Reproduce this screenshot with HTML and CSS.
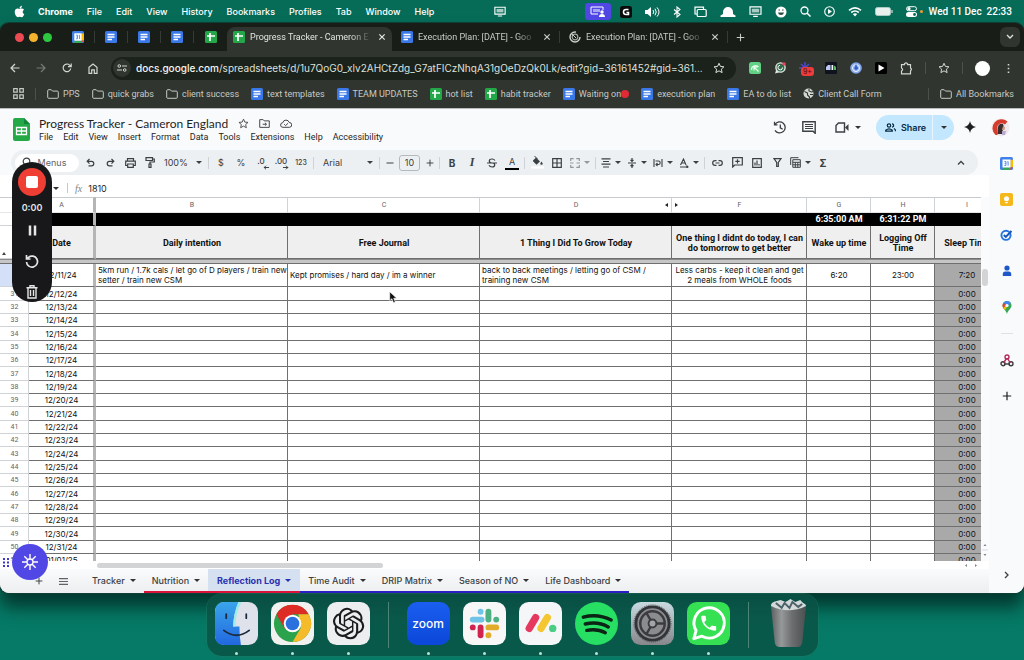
FILE: index.html
```html
<!DOCTYPE html>
<html lang="en">
<head>
    <meta charset="UTF-8">
    <meta name="viewport" content="width=device-width, initial-scale=1.0">
    <title>Progress Tracker - Cameron England</title>
    <link rel="stylesheet" href="styles.css">
</head>
<body>
    <!-- shared icons -->
    <svg class="sprite" aria-hidden="true">
        <symbol id="docs" viewBox="0 0 12 12"><rect width="12" height="12" rx="1.5" fill="#3b78e7"/><path d="M2.5 3.5h7M2.5 6h7M2.5 8.5h4.5" stroke="#fff" stroke-width="1.3"/></symbol>
        <symbol id="sheets" viewBox="0 0 12 12"><rect width="12" height="12" rx="1.5" fill="#23a748"/><path d="M5 2v8M2 5h8" stroke="#fff" stroke-width="1.7"/></symbol>
        <symbol id="calendar" viewBox="0 0 12 12"><rect width="12" height="12" rx="1.5" fill="#3f80ea"/><path d="M9.5 2.5H12V9.5H9.5z" fill="#fbbc04"/><path d="M2.5 9.5h7V12h-7z" fill="#34a853"/><path d="M9.5 9.5H12L9.5 12z" fill="#ea4335"/><rect x="2.3" y="2.3" width="7.4" height="7.4" fill="#fff"/><path d="M4 4.2h1.5v3.6H4M4.3 6h1.2M7.5 8V4.2l-.8.4" fill="none" stroke="#3f80ea" stroke-width=".8"/></symbol>
        <symbol id="folder" viewBox="0 0 12 10"><path d="M.7 8.300V1.700q0-1 1-1h2.500l1.300 1.400h4.800q1 0 1 1v5.200q0 1-1 1H1.700q-1 0-1-1z" fill="none" stroke="currentColor"/></symbol>
        <symbol id="close" viewBox="0 0 8 8"><path d="M1.300 1.300l5.400 5.400M6.700 1.300L1.300 6.700" stroke="currentColor" stroke-width="1.200"/></symbol>
        <symbol id="plus" viewBox="0 0 10 10"><path d="M5 .8v8.400M.8 5h8.400" stroke="currentColor" stroke-width="1.200"/></symbol>
        <symbol id="star" viewBox="0 0 24 24"><path d="M12 2.500l2.900 6.400 7 .7-5.200 4.700 1.500 6.900L12 17.700l-6.200 3.500 1.500-6.900L2.100 9.600l7-.7z" fill="none" stroke="currentColor" stroke-width="2"/></symbol>
        <symbol id="screen" viewBox="0 0 14 12"><path d="M1 1h12v8H1zM4.500 11.300h5" fill="none" stroke="currentColor" stroke-width="1.300"/><path d="M3 3h8v4H3z" fill="currentColor" opacity=".65"/></symbol>
    </svg>

    <div class="desktop">
        <header class="menubar">
            <svg class="apple" viewBox="0 0 384 512" width="11" height="13"><path fill="#fff" d="M318.700 268.700c-.2-36.700 16.400-64.400 50-84.800-18.800-26.900-47.200-41.700-84.700-44.600-35.500-2.800-74.300 20.700-88.500 20.700-15 0-49.400-19.700-76.400-19.700C63.300 141.200 4 184.800 4 273.500q0 39.300 14.400 81.200c12.800 36.700 59 126.700 107.200 125.200 25.200-.6 43-17.900 75.800-17.900 31.800 0 48.300 17.900 76.400 17.900 48.600-.7 90.400-82.500 102.600-119.300-65.200-30.700-61.700-90-61.700-91.900zm-56.600-164.200c27.300-32.400 24.800-61.900 24-72.500-24.100 1.400-52 16.400-67.900 34.900-17.500 19.800-27.800 44.300-25.600 71.900 26.100 2 49.900-11.400 69.500-34.300z"/></svg>
            <nav class="app-menu">
                <button class="app-name">Chrome</button>
                <button>File</button>
                <button>Edit</button>
                <button>View</button>
                <button>History</button>
                <button>Bookmarks</button>
                <button>Profiles</button>
                <button>Tab</button>
                <button>Window</button>
                <button>Help</button>
            </nav>
            <svg class="status-center" width="12" height="11"><use href="#screen"/></svg>
            <div class="status">
                <span class="sharing"><svg width="15" height="11" viewBox="0 0 15 11"><path d="M8 8H1V1h12v3" fill="none" stroke="#fff"/><path d="M3 3h7v3H3z" fill="#fff" opacity=".5"/><circle cx="12" cy="6" r="1.700" fill="#fff"/><path d="M9 11q0-3 3-3t3 3z" fill="#fff"/></svg></span>
                <svg width="12" height="12" viewBox="0 0 12 12"><rect width="12" height="12" rx="2.500" fill="#090c0b"/><path d="M8.500 3.500H6a2.500 2.500 0 0 0 0 5h2.500V6.500H6.500" fill="none" stroke="#fff" stroke-width="1.500"/></svg>
                <svg width="15" height="12" viewBox="0 0 15 12"><path d="M0 4h2.500L6 1v10L2.500 8H0z" fill="#fff"/><path d="M8 4q1.500 2 0 4M10 2.700q2.500 3.300 0 6.600M12 1.400q4 4.600 0 9.200" fill="none" stroke="#fff"/></svg>
                <svg width="8" height="12" viewBox="0 0 8 12"><path d="M1 3.500l6 5L4 11V1l3 2.500-6 5" fill="none" stroke="#fff" stroke-width="1.100"/></svg>
                <svg width="13" height="12" viewBox="0 0 13 12"><path d="M9.500 3V1.200H1V8h2" fill="none" stroke="#fff" stroke-width="1.200"/><rect x="3.200" y="3.500" width="9" height="7" rx="1" fill="none" stroke="#fff" stroke-width="1.200"/></svg>
                <svg width="16" height="12" viewBox="0 0 16 12"><path d="M3 8V6a5 5 0 0 1 10 0v2l2.500 1.500V11H.5V9.500z" fill="#fff"/></svg>
                <svg width="13" height="11"><use href="#screen"/></svg>
                <svg width="12" height="12" viewBox="0 0 12 12"><circle cx="6" cy="6" r="5.500" fill="#fff"/><path d="M3 6.500h6q-.5 2.500-3 2.500T3 6.500z" fill="#2b4a41"/><path d="M3.500 4h1.500M7 4h1.500" stroke="#2b4a41"/></svg>
                <svg width="11" height="11" viewBox="0 0 11 11"><circle cx="4.500" cy="4.500" r="3.500" fill="none" stroke="#fff" stroke-width="1.300"/><path d="M7 7l3.500 3.500" stroke="#fff" stroke-width="1.500"/></svg>
                <svg width="11" height="11" viewBox="0 0 11 11"><circle cx="5.500" cy="5.500" r="4.800" fill="none" stroke="#fff" stroke-width="1.100"/><path d="M4 3l4 2.500L4 8z" fill="#fff"/></svg>
                <svg width="14" height="11" viewBox="0 0 14 11"><path d="M1 4.300q6-5 12 0M3.200 6.500q3.800-3 7.600 0" fill="none" stroke="#fff" stroke-width="1.600"/><path d="M4.800 8q2.200-1.600 4.400 0L7 10.500z" fill="#fff"/></svg>
                <svg width="18" height="9" viewBox="0 0 18 9"><rect x=".5" y=".5" width="15" height="8" rx="2" fill="#e8f1ee" stroke="#a8cbc2"/><path d="M17 3v3" stroke="#a8cbc2" stroke-width="1.500"/></svg>
                <svg width="17" height="11" viewBox="0 0 17 11"><rect x=".5" y=".7" width="10" height="4" rx="2" fill="none" stroke="#fff"/><circle cx="3" cy="2.700" r="1.600" fill="#fff"/><rect y="6" width="11" height="5" rx="2.500" fill="#fff"/><circle cx="8.500" cy="8.500" r="1.400" fill="#066b57"/><circle cx="15.500" cy="5.500" r="1.500" fill="#f59b2d"/></svg>
            </div>
            <time class="clock">Wed 11 Dec&nbsp; 22:33</time>
        </header>

        <main class="window">
            <div class="tabstrip">
                <div class="lights"><i class="red"></i><i class="yellow"></i><i class="green"></i></div>
                <div class="pinned">
                    <button aria-label="Calendar"><svg width="12" height="12"><use href="#calendar"/></svg></button>
                    <button aria-label="Document 1"><svg width="12" height="12"><use href="#docs"/></svg></button>
                    <button aria-label="Document 2"><svg width="12" height="12"><use href="#docs"/></svg></button>
                    <button aria-label="Document 3"><svg width="12" height="12"><use href="#docs"/></svg></button>
                    <button aria-label="Sheet"><svg width="12" height="12"><use href="#sheets"/></svg></button>
                </div>
                <div class="tab active">
                    <svg width="12" height="12"><use href="#sheets"/></svg>
                    <span class="tab-title">Progress Tracker - Cameron E</span>
                    <button aria-label="Close tab"><svg width="8" height="8"><use href="#close"/></svg></button>
                </div>
                <div class="tab">
                    <svg width="12" height="12"><use href="#docs"/></svg>
                    <span class="tab-title">Execution Plan: [DATE] - Goo</span>
                    <button aria-label="Close tab"><svg width="8" height="8"><use href="#close"/></svg></button>
                </div>
                <div class="tab">
                    <svg width="12" height="12" viewBox="0 0 12 12"><circle cx="6" cy="6" r="5" fill="none" stroke="#ccd0cc" stroke-width="1.400" stroke-dasharray="24 7"/><circle cx="6" cy="6" r="2.800" fill="none" stroke="#9da39d" stroke-width="1.200"/><path d="M3 3l4 4" stroke="#ccd0cc"/></svg>
                    <span class="tab-title">Execution Plan: [DATE] - Goo</span>
                    <button aria-label="Close tab"><svg width="8" height="8"><use href="#close"/></svg></button>
                </div>
                <button class="new-tab" aria-label="New tab"><svg width="9" height="9"><use href="#plus"/></svg></button>
                <button class="tab-search" aria-label="Search tabs"><svg width="8" height="6" viewBox="0 0 8 6"><path d="M1 1l3 3 3-3" fill="none" stroke="#dfe3df" stroke-width="1.300"/></svg></button>
            </div>

            <div class="navbar">
                <div class="nav-buttons">
                    <button aria-label="Back"><svg width="10" height="10" viewBox="0 0 10 10"><path d="M9.500 5H1M5 1L1 5l4 4" fill="none" stroke="#d3d7d2" stroke-width="1.200"/></svg></button>
                    <button aria-label="Forward"><svg width="10" height="10" viewBox="0 0 10 10"><path d="M.5 5H9M5 1l4 4-4 4" fill="none" stroke="#747a74" stroke-width="1.200"/></svg></button>
                    <button aria-label="Reload"><svg width="10" height="10" viewBox="0 0 10 10"><path d="M8.700 5.500A3.800 3.800 0 1 1 7.800 2.300L9 3.500M9.200.5v3.200H6" fill="none" stroke="#d3d7d2" stroke-width="1.200"/></svg></button>
                    <button aria-label="Home"><svg width="10" height="11" viewBox="0 0 10 11"><path d="M1 10.300V4.300L5 1l4 3.300v6H6.300V6.800H3.700v3.500z" fill="none" stroke="#d3d7d2" stroke-width="1.200"/></svg></button>
                </div>
                <div class="address">
                    <span class="tune"><svg width="10" height="8" viewBox="0 0 10 8"><path d="M5 2h5M0 6h5" stroke="#d3d7d2" stroke-width="1.200"/><circle cx="2.300" cy="2" r="1.300" fill="none" stroke="#d3d7d2"/><circle cx="7.700" cy="6" r="1.300" fill="none" stroke="#d3d7d2"/></svg></span>
                    <span class="url"><b>docs.google.com</b>/spreadsheets/d/1u7QoG0_xlv2AHCtZdg_G7atFICzNhqA31gOeDzQk0Lk/edit?gid=36161452#gid=361...</span>
                    <button aria-label="Bookmark this tab"><svg width="12" height="12"><use href="#star"/></svg></button>
                </div>
                <div class="extensions">
                    <button aria-label="Extension 1"><svg width="12" height="12" viewBox="0 0 12 12"><rect width="12" height="12" rx="2.500" fill="#62d184"/><path d="M2.500 8a4 4 0 0 1 7-3M5 5l4.500 4.500M5 8.500V5h3.500" fill="none" stroke="#e9fff0" stroke-width="1.200"/></svg></button>
                    <button aria-label="Extension 2"><svg width="12" height="12" viewBox="0 0 12 12"><circle cx="6.500" cy="5.500" r="4.600" fill="#2f6b4c" stroke="#dfe6df" stroke-width="1.400"/><path d="M1 11.500l1.300-4 2.500 3z" fill="#dfe6df"/><path d="M8.500 5.500A2.300 2.300 0 1 1 6 3.300" fill="none" stroke="#fff"/><circle cx="10" cy="2" r="1.800" fill="#e0455a"/></svg></button>
                    <button class="badged" aria-label="Extension 3"><svg width="13" height="12" viewBox="0 0 13 12"><path d="M6 0v12M0 6h12M2 2l8 8M10 2l-8 8" stroke="#4a48c9" stroke-width="1.600"/></svg><span class="ext-badge">9+</span></button>
                    <button aria-label="Extension 4"><svg width="12" height="12" viewBox="0 0 12 12"><rect width="12" height="12" rx="1" fill="#10131d"/><path d="M1 8V5l2-2h2.500v5z" fill="#b9c7f2"/><path d="M6.500 3H8v5H6.500z" fill="#f2f4ff"/><path d="M8.500 3l2.500 2v3H8.500z" fill="#57b85c"/></svg></button>
                    <button aria-label="Extension 5"><svg width="12" height="12" viewBox="0 0 12 12"><circle cx="6" cy="6" r="5.800" fill="#84a9ee"/><circle cx="6" cy="6" r="3.500" fill="none" stroke="#f4f8ff"/><path d="M6 2.500V8M4.500 6H8" stroke="#2b57bd" stroke-width="1.300"/></svg></button>
                    <button aria-label="Extension 6"><svg width="12" height="12" viewBox="0 0 12 12"><rect width="12" height="12" rx="1.500" fill="#000"/><path d="M3.500 2.500L9.500 6l-6 3.500z" fill="#fff"/></svg></button>
                    <button aria-label="Extensions"><svg width="13" height="13" viewBox="0 0 13 13"><path d="M1.500 2.700h3V1.600q1.500-1.300 3 0v1.100h3V6q1.800 1.200 0 3v2.800h-9V9q2.200-1.500 0-3z" fill="none" stroke="#d3d7d2" stroke-width="1.200"/></svg></button>
                </div>
                <span class="bar-sep"></span>
                <button class="labs" aria-label="Reading list"><svg width="12" height="12"><use href="#star"/></svg></button>
                <span class="bar-sep"></span>
                <button class="profile" aria-label="Profile"></button>
                <button class="more" aria-label="More"><svg width="3" height="11" viewBox="0 0 3 11"><path d="M.7 1h1.600v1.600H.7zM.7 4.700h1.600v1.600H.7zM.7 8.400h1.600V10H.7z" fill="#d3d7d2"/></svg></button>
            </div>

            <nav class="bookmarks">
                <a href="#" class="apps" aria-label="Apps"><svg width="11" height="11" viewBox="0 0 11 11"><path d="M.7.7h3.500v3.500H.7zM6.800.7h3.500v3.500H6.800zM.7 6.800h3.500v3.500H.7zM6.800 6.800h3.500v3.500H6.800z" fill="none" stroke="#c6cac5" stroke-width="1.200"/></svg></a>
                <span class="bar-sep"></span>
                <a href="#"><svg width="12" height="10"><use href="#folder"/></svg>PPS</a>
                <a href="#"><svg width="12" height="10"><use href="#folder"/></svg>quick grabs</a>
                <a href="#"><svg width="12" height="10"><use href="#folder"/></svg>client success</a>
                <a href="#"><svg width="12" height="12"><use href="#docs"/></svg>text templates</a>
                <a href="#"><svg width="12" height="12"><use href="#docs"/></svg>TEAM UPDATES</a>
                <a href="#"><svg width="12" height="12"><use href="#sheets"/></svg>hot list</a>
                <a href="#"><svg width="12" height="12"><use href="#sheets"/></svg>habit tracker</a>
                <a href="#"><svg width="12" height="12"><use href="#docs"/></svg><span>Waiting on<i class="red-dot"></i></span></a>
                <a href="#"><svg width="12" height="12"><use href="#docs"/></svg>execution plan</a>
                <a href="#"><svg width="12" height="12"><use href="#docs"/></svg>EA to do list</a>
                <a href="#"><svg width="11" height="11" viewBox="0 0 11 11"><circle cx="5.500" cy="5.500" r="5" fill="#d3d7d2"/><path d="M1.500 3.500l3 1.500v2l2 2v1.500M6 1v2l2.500 1L10 3.500M7 6.500h3" fill="none" stroke="#30352f" stroke-width="1.100"/></svg>Client Call Form</a>
                <span class="bar-sep push"></span>
                <a href="#"><svg width="12" height="10"><use href="#folder"/></svg>All Bookmarks</a>
            </nav>

            <div class="sheets">
                <div class="doc-header">
                    <svg class="doc-logo" width="17" height="23" viewBox="0 0 17 23"><path d="M0 2q0-2 2-2h9l6 6v15q0 2-2 2H2q-2 0-2-2z" fill="#25a946"/><path d="M11 0l6 6h-6z" fill="#12853a"/><path d="M3.500 9.500h10v7h-10zM8.500 9.500v7M3.500 13h10" fill="none" stroke="#fff" stroke-width="1.300"/></svg>
                    <div class="doc-info">
                        <div class="doc-title">
                            <h1>Progress Tracker - Cameron England</h1>
                            <button aria-label="Star"><svg width="11" height="11"><use href="#star"/></svg></button>
                            <button aria-label="Move"><svg width="11" height="9" viewBox="0 0 12 10"><path d="M.7 9.300V.7h3.800l1.200 1.400h5.600v7.200zM4 5.800h4M6.500 4.200L8.200 5.800 6.500 7.400" fill="none" stroke="#444746" stroke-width="1.100"/></svg></button>
                            <button aria-label="Saved to Drive"><svg width="12" height="9" viewBox="0 0 12 9"><path d="M3 8.300a2.300 2.300 0 0 1-.2-4.600 3.300 3.300 0 0 1 6.400-.2 2.400 2.400 0 0 1 .2 4.800zM4.200 5.200l1.400 1.400L8 4.300" fill="none" stroke="#444746"/></svg></button>
                        </div>
                        <nav class="doc-menu">
                            <button>File</button>
                            <button>Edit</button>
                            <button>View</button>
                            <button>Insert</button>
                            <button>Format</button>
                            <button>Data</button>
                            <button>Tools</button>
                            <button>Extensions</button>
                            <button>Help</button>
                            <button>Accessibility</button>
                        </nav>
                    </div>
                    <div class="doc-actions">
                        <button aria-label="Version history"><svg width="14" height="13" viewBox="0 0 14 13"><path d="M2 3.500A5.500 5.500 0 1 1 2 9.300M1.500.8v3h3M7.300 3.500v3.300l2.400 1.500" fill="none" stroke="#3c4043" stroke-width="1.300"/></svg></button>
                        <button aria-label="Comments"><svg width="14" height="13" viewBox="0 0 14 13"><path d="M.8.8h12.400v11.500l-2.200-2H.8z" fill="none" stroke="#3c4043" stroke-width="1.400"/><path d="M3 3.500h8M3 5.500h8M3 7.500h8" stroke="#3c4043" stroke-width="1.100"/></svg></button>
                        <button class="meet has-caret" aria-label="Meet"><svg width="14" height="11" viewBox="0 0 14 11"><path d="M1 3.500L3.500 1H9.500v9H1z" fill="none" stroke="#3c4043" stroke-width="1.400"/><path d="M10 5.500L13.500 2v7z" fill="#3c4043"/></svg></button>
                        <div class="share">
                            <button class="share-main"><svg width="11" height="9" viewBox="0 0 11 9"><circle cx="4" cy="2.500" r="1.700" fill="none" stroke="#0b2b45" stroke-width="1.200"/><path d="M.7 8.200V7.300Q4 4.500 7.300 7.300v.9zM7 .8q2 .2 1.500 2.500l-1.500 1M9 5.500l1.400 1.400v1.300" fill="none" stroke="#0b2b45" stroke-width="1.200"/></svg>Share</button>
                            <button class="share-more has-caret" aria-label="Sharing options"></button>
                        </div>
                        <button aria-label="Gemini"><svg width="12" height="12" viewBox="0 0 12 12"><path d="M6 0q.8 5.200 6 6-5.200.8-6 6-.8-5.200-6-6 5.200-.8 6-6z" fill="#1f1f1f"/></svg></button>
                        <button aria-label="Account"><svg width="19" height="19" viewBox="0 0 19 19"><circle cx="9.500" cy="9.500" r="9" fill="#eee8ea"/><path d="M4.500 17A9 9 0 0 1 16.500 3.500l-2.500 3Q9 3.500 6.500 8L6.500 17z" fill="#d63b2b"/><path d="M7 9q1-4 5-3l1 3-1.500 2 1 5H6.500z" fill="#3a2d2d"/><path d="M12 8l2 1-.5 3H11z" fill="#c79a88"/><path d="M11 13h4l-1 4h-3z" fill="#b9a7cf"/></svg></button>
                    </div>
                </div>

                <div class="workspace">
                    <div class="editor">
                        <div class="format-bar">
                            <button class="menus"><svg width="11" height="11" viewBox="0 0 11 11"><circle cx="4.500" cy="4.500" r="3.300" fill="none" stroke="#3c4043" stroke-width="1.200"/><path d="M7 7l3.500 3.500" stroke="#3c4043" stroke-width="1.200"/></svg>Menus</button>
                            <button class="tool" aria-label="Undo"><svg width="9" height="9" viewBox="0 0 9 9"><path d="M3.500 1L1.200 3.300l2.300 2.300M1.500 3.300h4a2.300 2.300 0 0 1 0 4.600H2.500" fill="none" stroke="#3c4043" stroke-width="1.200"/></svg></button>
                            <button class="tool" aria-label="Redo"><svg width="9" height="9" viewBox="0 0 9 9"><path d="M5.500 1l2.300 2.300-2.300 2.300M7.500 3.300h-4a2.300 2.300 0 0 0 0 4.600h3" fill="none" stroke="#3c4043" stroke-width="1.200"/></svg></button>
                            <button class="tool" aria-label="Print"><svg width="11" height="10" viewBox="0 0 11 10"><path d="M2.500 3V.7h6V3M2.500 7.500H.7V3.200h9.600v4.300H8.500M2.700 6h5.600v3.300H2.700z" fill="none" stroke="#3c4043" stroke-width="1.200"/></svg></button>
                            <button class="tool" aria-label="Paint format"><svg width="10" height="11" viewBox="0 0 10 11"><path d="M1 .7h6.500v2.800H1zM7.500 2h1.800v3H5v2M4 7h2v3.300H4z" fill="none" stroke="#3c4043" stroke-width="1.200"/></svg></button>
                            <span class="drop zoom"><select aria-label="Zoom"><option>100%</option></select></span>
                            <span class="tool-sep"></span>
                            <button class="tool" aria-label="Currency">$</button>
                            <button class="tool" aria-label="Percent">%</button>
                            <button class="tool decimal" aria-label="Decrease decimals">.0<svg width="6" height="5" viewBox="0 0 6 5"><path d="M6 2.500H1M3 .7L1.200 2.500 3 4.300" fill="none" stroke="#3c4043"/></svg></button>
                            <button class="tool decimal" aria-label="Increase decimals">.00<svg width="6" height="5" viewBox="0 0 6 5"><path d="M0 2.500h5M3 .7l1.800 1.800L3 4.300" fill="none" stroke="#3c4043"/></svg></button>
                            <button class="tool small" aria-label="More formats">123</button>
                            <span class="tool-sep"></span>
                            <span class="drop font"><select aria-label="Font"><option>Arial</option></select></span>
                            <span class="tool-sep"></span>
                            <div class="font-size">
                                <button aria-label="Decrease font size"><svg width="8" height="8" viewBox="0 0 8 8"><path d="M.5 4h7" stroke="#3c4043" stroke-width="1.200"/></svg></button>
                                <input type="text" value="10" aria-label="Font size">
                                <button aria-label="Increase font size"><svg width="8" height="8"><use href="#plus"/></svg></button>
                            </div>
                            <span class="tool-sep"></span>
                            <button class="tool bold" aria-label="Bold">B</button>
                            <button class="tool italic" aria-label="Italic">I</button>
                            <button class="tool" aria-label="Strikethrough"><svg width="10" height="10" viewBox="0 0 10 10"><path d="M8 2.500Q7 1 5 1 2.300 1 2.300 3T5 5M2 7.300Q3 9 5 9q2.700 0 2.700-2T5 5M0 5h10" fill="none" stroke="#3c4043" stroke-width="1.200"/></svg></button>
                            <button class="tool text-color" aria-label="Text color">A</button>
                            <span class="tool-sep"></span>
                            <button class="tool" aria-label="Fill color"><svg width="13" height="13" viewBox="0 0 13 13"><path d="M2 4.500L5 1.500l4 4-3.500 3.300L2 5.300z" fill="#3c4043"/><path d="M3.500 0l3 3" stroke="#3c4043"/><path d="M10.500 5.500q2.500 3.300 0 3.300t0-3.300z" fill="#3c4043"/><path d="M0 10.500h13v2H0z" fill="#fff"/></svg></button>
                            <button class="tool" aria-label="Borders"><svg width="10" height="10" viewBox="0 0 10 10"><path d="M.7.7h8.600v8.600H.7zM5 .7v8.600M.7 5h8.600" fill="none" stroke="#3c4043" stroke-width="1.200"/></svg></button>
                            <button class="tool-drop faded" aria-label="Merge cells"><svg width="10" height="10" viewBox="0 0 10 10"><path d="M.7 3V.7h3M6.300.7h3V3M9.300 7v2.300h-3M3.700 9.300h-3V7M0 5h3.500M10 5H6.500" fill="none" stroke="#3c4043" stroke-width="1.200"/></svg></button>
                            <span class="tool-sep"></span>
                            <button class="tool-drop" aria-label="Horizontal align"><svg width="10" height="10" viewBox="0 0 10 10"><path d="M.5.800h9M2 3.500h6M.5 6.200h9M2 9h6" stroke="#3c4043" stroke-width="1.200"/></svg></button>
                            <button class="tool-drop" aria-label="Vertical align"><svg width="10" height="10" viewBox="0 0 10 10"><path d="M1 5h8M5 0v3M5 10V7M3.500 1.800L5 3.300l1.500-1.500M3.500 8.200L5 6.700l1.500 1.500" fill="none" stroke="#3c4043" stroke-width="1.200"/></svg></button>
                            <button class="tool-drop" aria-label="Text wrapping"><svg width="10" height="10" viewBox="0 0 10 10"><path d="M1 1v8M9 1v8M2.500 3h3q1.700 0 1.700 1.700T5.500 6.500H3M4.500 5L3 6.500 4.500 8" fill="none" stroke="#3c4043" stroke-width="1.100"/></svg></button>
                            <button class="tool-drop" aria-label="Text rotation"><svg width="10" height="10" viewBox="0 0 10 10"><path d="M1.500 7L4.500 1l2.500 6M2.500 5h4M1 9h8M7.500 7.500L9 9 7.500 10" fill="none" stroke="#3c4043" stroke-width="1.100"/></svg></button>
                            <span class="tool-sep"></span>
                            <button class="tool" aria-label="Insert link"><svg width="11" height="6" viewBox="0 0 11 6"><path d="M4.500.7H3a2.300 2.300 0 0 0 0 4.600h1.500M6.500.7H8a2.300 2.300 0 0 1 0 4.600H6.500M3.500 3h4" fill="none" stroke="#3c4043" stroke-width="1.200"/></svg></button>
                            <button class="tool" aria-label="Insert comment"><svg width="11" height="11" viewBox="0 0 11 11"><path d="M.7 10V.7h9.600V8H2.700zM5.500 2.200v4.300M3.300 4.300h4.400" fill="none" stroke="#3c4043" stroke-width="1.200"/></svg></button>
                            <button class="tool" aria-label="Insert chart"><svg width="10" height="10" viewBox="0 0 10 10"><path d="M.7.7h8.600v8.600H.7zM3 7.500V4.500M5 7.500V2.500M7 7.500V6" fill="none" stroke="#3c4043" stroke-width="1.200"/></svg></button>
                            <button class="tool" aria-label="Create a filter"><svg width="9" height="9" viewBox="0 0 9 9"><path d="M1 .7h7L5.300 4.500v4H3.700v-4z" fill="none" stroke="#3c4043" stroke-width="1.200"/></svg></button>
                            <button class="tool-drop" aria-label="Table views"><svg width="11" height="11" viewBox="0 0 11 11"><path d="M.7 8V.7H8.500M2.800 2.700h7.500v7.600H2.800zM2.800 5.300h7.500M2.800 7.800h7.500M5.300 5.300v5M7.800 5.300v5" fill="none" stroke="#3c4043" stroke-width="1"/></svg></button>
                            <button class="tool bold" aria-label="Functions">Σ</button>
                            <button class="tool collapse" aria-label="Hide the menus"><svg width="8" height="6" viewBox="0 0 8 6"><path d="M1 4.500l3-3 3 3" fill="none" stroke="#3c4043" stroke-width="1.300"/></svg></button>
                        </div>

                        <div class="formula-bar">
                            <button class="name-box has-caret" aria-label="Name box"></button>
                            <span class="fx">fx</span>
                            <input type="text" value="1810" aria-label="Formula">
                        </div>

                        <div class="grid-area">
                            <div class="grid-view">
                                <table class="grid">
                                    <colgroup>
                                        <col class="c-num"><col class="c-a"><col class="c-wide"><col class="c-wide"><col class="c-wide"><col class="c-f"><col class="c-time"><col class="c-time"><col class="c-time">
                                    </colgroup>
                                    <thead>
                                        <tr class="letters"><th></th><th>A</th><th>B</th><th>C</th><th class="before-hidden">D</th><th class="after-hidden">F</th><th>G</th><th>H</th><th>I</th></tr>
                                        <tr class="totals"><th></th><td></td><td></td><td></td><td></td><td></td><td>6:35:00 AM</td><td>6:31:22 PM</td><td></td></tr>
                                        <tr class="titles"><th></th><td>Date</td><td>Daily intention</td><td>Free Journal</td><td>1 Thing I Did To Grow Today</td><td>One thing I didnt do today, I can do tomorrow to get better</td><td>Wake up time</td><td>Logging Off Time</td><td>Sleep Time</td></tr>
                                        <tr class="freeze"><td colspan="9"></td></tr>
                                    </thead>
                                    <tbody class="today">
                                        <tr><th></th><td>12/11/24</td><td>5km run / 1.7k cals / let go of D players / train new<br>setter / train new CSM</td><td>Kept promises / hard day / im a winner</td><td>back to back meetings / letting go of CSM /<br>training new CSM</td><td>Less carbs - keep it clean and get 2 meals from WHOLE foods</td><td>6:20</td><td>23:00</td><td>7:20</td></tr>
                                    </tbody>
                                    <tbody class="days">
                                        <tr><th>31</th><td>12/12/24</td><td></td><td></td><td></td><td></td><td></td><td></td><td>0:00</td></tr>
                                        <tr><th>32</th><td>12/13/24</td><td></td><td></td><td></td><td></td><td></td><td></td><td>0:00</td></tr>
                                        <tr><th>33</th><td>12/14/24</td><td></td><td></td><td></td><td></td><td></td><td></td><td>0:00</td></tr>
                                        <tr><th>34</th><td>12/15/24</td><td></td><td></td><td></td><td></td><td></td><td></td><td>0:00</td></tr>
                                        <tr><th>35</th><td>12/16/24</td><td></td><td></td><td></td><td></td><td></td><td></td><td>0:00</td></tr>
                                        <tr><th>36</th><td>12/17/24</td><td></td><td></td><td></td><td></td><td></td><td></td><td>0:00</td></tr>
                                        <tr><th>37</th><td>12/18/24</td><td></td><td></td><td></td><td></td><td></td><td></td><td>0:00</td></tr>
                                        <tr><th>38</th><td>12/19/24</td><td></td><td></td><td></td><td></td><td></td><td></td><td>0:00</td></tr>
                                        <tr><th>39</th><td>12/20/24</td><td></td><td></td><td></td><td></td><td></td><td></td><td>0:00</td></tr>
                                        <tr><th>40</th><td>12/21/24</td><td></td><td></td><td></td><td></td><td></td><td></td><td>0:00</td></tr>
                                        <tr><th>41</th><td>12/22/24</td><td></td><td></td><td></td><td></td><td></td><td></td><td>0:00</td></tr>
                                        <tr><th>42</th><td>12/23/24</td><td></td><td></td><td></td><td></td><td></td><td></td><td>0:00</td></tr>
                                        <tr><th>43</th><td>12/24/24</td><td></td><td></td><td></td><td></td><td></td><td></td><td>0:00</td></tr>
                                        <tr><th>44</th><td>12/25/24</td><td></td><td></td><td></td><td></td><td></td><td></td><td>0:00</td></tr>
                                        <tr><th>45</th><td>12/26/24</td><td></td><td></td><td></td><td></td><td></td><td></td><td>0:00</td></tr>
                                        <tr><th>46</th><td>12/27/24</td><td></td><td></td><td></td><td></td><td></td><td></td><td>0:00</td></tr>
                                        <tr><th>47</th><td>12/28/24</td><td></td><td></td><td></td><td></td><td></td><td></td><td>0:00</td></tr>
                                        <tr><th>48</th><td>12/29/24</td><td></td><td></td><td></td><td></td><td></td><td></td><td>0:00</td></tr>
                                        <tr><th>49</th><td>12/30/24</td><td></td><td></td><td></td><td></td><td></td><td></td><td>0:00</td></tr>
                                        <tr><th>50</th><td>12/31/24</td><td></td><td></td><td></td><td></td><td></td><td></td><td>0:00</td></tr>
                                        <tr><th>51</th><td>01/01/25</td><td></td><td></td><td></td><td></td><td></td><td></td><td>0:00</td></tr>
                                    </tbody>
                                </table>
                            </div>
                            <div class="v-scroll">
                                <i class="thumb"></i>
                                <svg width="6" height="18" viewBox="0 0 6 18"><path d="M1.500 5L3 3l1.500 2zM1.500 13L3 15l1.500-2z" fill="#80868b"/><path d="M0 9h6" stroke="#d9dce0"/></svg>
                            </div>
                        </div>
                        <div class="h-scroll">
                            <i class="thumb"></i>
                            <svg width="18" height="7" viewBox="0 0 18 7"><path d="M5 2L3 3.500 5 5zM13 2l2 1.500L13 5z" fill="#80868b"/></svg>
                        </div>

                        <div class="sheet-tabs">
                            <button class="sheet-tool" aria-label="Add sheet"><svg width="8" height="8"><use href="#plus"/></svg></button>
                            <button class="sheet-tool" aria-label="All sheets"><svg width="9" height="7" viewBox="0 0 9 7"><path d="M0 .7h9M0 3.500h9M0 6.300h9" stroke="#5f6368" stroke-width="1.200"/></svg></button>
                            <button class="sheet-tab has-caret">Tracker</button>
                            <button class="sheet-tab has-caret red">Nutrition</button>
                            <button class="sheet-tab has-caret red current">Reflection Log</button>
                            <button class="sheet-tab has-caret blue">Time Audit</button>
                            <button class="sheet-tab has-caret blue">DRIP Matrix</button>
                            <button class="sheet-tab has-caret blue">Season of NO</button>
                            <button class="sheet-tab has-caret blue">Life Dashboard</button>
                        </div>
                    </div>

                    <aside class="side-panel">
                        <button aria-label="Calendar"><svg width="13" height="13"><use href="#calendar"/></svg></button>
                        <button aria-label="Keep"><svg width="13" height="13" viewBox="0 0 13 13"><rect width="13" height="13" rx="2" fill="#f5b81c"/><circle cx="6.500" cy="5.700" r="2.500" fill="#fff"/><path d="M5.300 9h2.400v1.300H5.300z" fill="#fff"/></svg></button>
                        <button aria-label="Tasks"><svg width="13" height="12" viewBox="0 0 13 12"><circle cx="6" cy="6.300" r="4.600" fill="none" stroke="#2374e1" stroke-width="1.900"/><path d="M3.800 6l2 2L11.500 2" fill="none" stroke="#1558b8" stroke-width="1.900"/></svg></button>
                        <button aria-label="Contacts"><svg width="10" height="12" viewBox="0 0 10 12"><circle cx="5" cy="3" r="2.600" fill="#1f57c9"/><path d="M.8 11V9q0-2.500 2.500-2.500h3.400q2.500 0 2.500 2.500v2z" fill="#1f57c9"/></svg></button>
                        <button aria-label="Maps"><svg width="10" height="13" viewBox="0 0 10 13"><path d="M5 0a4.500 4.500 0 0 1 4.500 4.500C9.500 7.500 6 9 5 13 4 9 .5 7.500.5 4.500A4.500 4.500 0 0 1 5 0z" fill="#34a853"/><path d="M1.500 1.700A4.500 4.500 0 0 1 8.700 2L5 5z" fill="#4285f4"/><path d="M1.500 1.700L4 4 1.500 7.500Q-.5 4.500 1.500 1.700z" fill="#ea4335"/><path d="M1.300 7L3.500 5l1.500 1-2 3z" fill="#fbbc04"/><circle cx="5" cy="4.500" r="1.600" fill="#fff"/></svg></button>
                        <hr>
                        <button aria-label="Webhooks"><svg width="14" height="13" viewBox="0 0 14 13"><circle cx="7" cy="3" r="2" fill="none" stroke="#b42a5b" stroke-width="1.400"/><circle cx="3" cy="9.700" r="2" fill="none" stroke="#3b3b3f" stroke-width="1.400"/><circle cx="11" cy="9.700" r="2" fill="none" stroke="#3b3b3f" stroke-width="1.400"/><path d="M6.500 4.500L3.500 9M7.300 4l3 5" stroke="#b42a5b" stroke-width="1.400"/><path d="M4 10h6" stroke="#3b3b3f" stroke-width="1.400"/></svg></button>
                        <button aria-label="Get add-ons"><svg width="10" height="10"><use href="#plus"/></svg></button>
                        <button class="hide-panel" aria-label="Hide side panel"><svg width="5" height="8" viewBox="0 0 5 8"><path d="M1 1l3 3-3 3" fill="none" stroke="#3c4043" stroke-width="1.300"/></svg></button>
                    </aside>
                </div>
            </div>
        </main>

        <footer class="dock">
            <button class="app finder" aria-label="Finder"><svg viewBox="0 0 44 44"><defs><linearGradient id="fl" x2="0" y2="1"><stop stop-color="#3aa5ea"/><stop offset="1" stop-color="#2268e0"/></linearGradient></defs><rect width="44" height="44" rx="10" fill="#dfe2ea"/><path d="M10 0h14q-5 12-5.500 25H25q0 10 1.500 19H10Q0 44 0 34V10Q0 0 10 0z" fill="url(#fl)"/><path d="M24 0h3q-6 12-6 25h-2.500Q19 12 24 0z" fill="#9feaea"/><path d="M11.500 12.500v4M32 12.500v4M9 29q13 10 26 0" fill="none" stroke="#1c2a3d" stroke-width="1.800" stroke-linecap="round"/></svg></button>
            <button class="app" aria-label="Google Chrome"><svg viewBox="0 0 44 44"><rect width="44" height="44" rx="10" fill="#f1f1ef"/><circle cx="22" cy="22" r="19" fill="#2ba24c"/><path d="M5.500 12.500A19 19 0 0 1 38.500 12.500H22L14 27z" fill="#dd2b25"/><path d="M38.500 12.500A19 19 0 0 1 22 41L30.500 26.500 28 12.500z" fill="#f6bb2b"/><circle cx="22" cy="22" r="9" fill="#fff"/><circle cx="22" cy="22" r="7" fill="#2a71de"/></svg></button>
            <button class="app" aria-label="ChatGPT"><svg viewBox="0 0 44 44"><rect width="44" height="44" rx="10" fill="#eceef0"/><path transform="translate(6 6) scale(1.340)" fill="#1b1c1e" d="M22.2819 9.8211a5.9847 5.9847 0 0 0-.5157-4.9108 6.0462 6.0462 0 0 0-6.5098-2.9A6.0651 6.0651 0 0 0 4.9807 4.1818a5.9847 5.9847 0 0 0-3.9977 2.9 6.0462 6.0462 0 0 0 .7427 7.0966 5.98 5.98 0 0 0 .511 4.9107 6.051 6.051 0 0 0 6.5146 2.9001A5.9847 5.9847 0 0 0 13.2599 24a6.0557 6.0557 0 0 0 5.7718-4.2058 5.9894 5.9894 0 0 0 3.9977-2.9001 6.0557 6.0557 0 0 0-.7475-7.0729zm-9.022 12.6081a4.4755 4.4755 0 0 1-2.8764-1.0408l.1419-.0804 4.7783-2.7582a.7948.7948 0 0 0 .3927-.6813v-6.7369l2.02 1.1686a.071.071 0 0 1 .038.052v5.5826a4.504 4.504 0 0 1-4.4945 4.4944zm-9.6607-4.1254a4.4708 4.4708 0 0 1-.5346-3.0137l.142.0852 4.783 2.7582a.7712.7712 0 0 0 .7806 0l5.8428-3.3685v2.3324a.0804.0804 0 0 1-.0332.0615L9.74 19.9502a4.4992 4.4992 0 0 1-6.1408-1.6464zM2.3408 7.8956a4.485 4.485 0 0 1 2.3655-1.9728V11.6a.7664.7664 0 0 0 .3879.6765l5.8144 3.3543-2.0201 1.1685a.0757.0757 0 0 1-.071 0l-4.8303-2.7865A4.504 4.504 0 0 1 2.3408 7.872zm16.5963 3.8558L13.1038 8.364 15.1192 7.2a.0757.0757 0 0 1 .071 0l4.8303 2.7913a4.4944 4.4944 0 0 1-.6765 8.1042v-5.6772a.79.79 0 0 0-.407-.667zm2.0107-3.0231l-.142-.0852-4.7735-2.7818a.7759.7759 0 0 0-.7854 0L9.409 9.2297V6.8974a.0662.0662 0 0 1 .0284-.0615l4.8303-2.7866a4.4992 4.4992 0 0 1 6.6802 4.66zM8.3065 12.863l-2.02-1.1638a.0804.0804 0 0 1-.038-.0567V6.0742a4.4992 4.4992 0 0 1 7.3757-3.4537l-.142.0805L8.704 5.459a.7948.7948 0 0 0-.3927.6813zm1.0976-2.3654l2.602-1.4998 2.6069 1.4998v2.9994l-2.5974 1.4997-2.6067-1.4997Z"/></svg></button>
            <span class="dock-sep"></span>
            <button class="app zoom-app">zoom</button>
            <button class="app" aria-label="Slack"><svg viewBox="0 0 44 44"><rect width="44" height="44" rx="10" fill="#f7f7f7"/><g stroke-width="6" stroke-linecap="round"><path d="M10 18h9" stroke="#6ec3e6"/><path d="M18 10h0" stroke="#6ec3e6"/><path d="M26 10v8" stroke="#4cb083"/><path d="M34 18h0" stroke="#4cb083"/><path d="M26 26h8" stroke="#e2ab2c"/><path d="M26 34h0" stroke="#e2ab2c"/><path d="M18 26v8" stroke="#d1234f"/><path d="M10 26h0" stroke="#d1234f"/></g></svg></button>
            <button class="app" aria-label="monday"><svg viewBox="0 0 44 44"><rect width="44" height="44" rx="10" fill="#f5f6f8"/><g stroke-width="7.500" stroke-linecap="round"><path d="M10.500 27l6.500-11" stroke="#e5395f"/><path d="M22.500 27L29 16" stroke="#f4c631"/><path d="M34.500 27h0" stroke="#48cd83"/></g></svg></button>
            <button class="app" aria-label="Spotify"><svg viewBox="0 0 44 44"><circle cx="22" cy="22" r="22" fill="#27df63"/><path d="M8.500 15.500q15-4 28.500 3M10.500 22.500q13-3 23.500 3M12 29q11-2 19 2.500" fill="none" stroke="#0c2415" stroke-width="3.500" stroke-linecap="round"/></svg></button>
            <button class="app" aria-label="System Settings"><svg viewBox="0 0 44 44"><defs><linearGradient id="st" x2="0" y2="1"><stop stop-color="#c9dbe0"/><stop offset="1" stop-color="#86878b"/></linearGradient></defs><rect width="44" height="44" rx="10" fill="url(#st)"/><circle cx="22" cy="22" r="17" fill="#8b8c90" stroke="#333438" stroke-width="3"/><circle cx="22" cy="22" r="19" fill="none" stroke="#4d4e52" stroke-width="1" stroke-dasharray="1 1"/><circle cx="22" cy="22" r="12.500" fill="none" stroke="#3b3c40" stroke-width="2.500"/><path d="M22 22h12M22 22L16 11.500M22 22l-6 10.500" stroke="#3b3c40" stroke-width="2.500"/><circle cx="22" cy="22" r="4" fill="#a3a4a8" stroke="#3b3c40" stroke-width="2"/></svg></button>
            <button class="app" aria-label="WhatsApp"><svg viewBox="0 0 44 44"><rect width="44" height="44" rx="10" fill="#35e152"/><path d="M7 37.500l2.300-8.300A15.500 15.500 0 1 1 15.300 35z" fill="none" stroke="#fff" stroke-width="3" stroke-linejoin="round"/><path transform="translate(12 11.500) scale(.85)" d="M6.620 10.790c1.440 2.830 3.760 5.140 6.590 6.590l2.200-2.200c.27-.27.67-.36 1.020-.24 1.120.37 2.330.57 3.570.57.55 0 1 .45 1 1V20c0 .55-.45 1-1 1-9.390 0-17-7.610-17-17 0-.55.45-1 1-1h3.500c.55 0 1 .45 1 1 0 1.250.2 2.450.57 3.570.11.35.03.74-.25 1.020l-2.200 2.200z" fill="#fff"/></svg></button>
            <span class="dock-sep"></span>
            <button class="app trash" aria-label="Bin"><svg viewBox="0 0 44 50"><defs><linearGradient id="tr"><stop stop-color="#5b5f60"/><stop offset=".3" stop-color="#96999a"/><stop offset=".6" stop-color="#6c6e70"/><stop offset="1" stop-color="#4b4f50"/></linearGradient></defs><path d="M4 7q18 8 36 0l-4 38q-1 4-5 4H13q-4 0-5-4z" fill="url(#tr)"/><path d="M4 7q0-4 6-5l4-1 5 2 5-3 5 3 5-2 3 3q3 1 3 3-18 9-36 0z" fill="#d5d9da"/><path d="M9 4l6 5 3-5 5 5 3-6 6 5 4-3" fill="none" stroke="#4c6168" stroke-width="2"/></svg></button>
        </footer>

        <!-- floating screen recorder controls -->
        <div class="recorder">
            <button class="stop" aria-label="Stop recording"></button>
            <span>0:00</span>
            <button class="pause" aria-label="Pause"><svg width="9" height="11" viewBox="0 0 9 11"><path d="M2 .5v10M7 .5v10" stroke="#e6e6e6" stroke-width="2.500"/></svg></button>
            <button aria-label="Restart"><svg width="14" height="14" viewBox="0 0 14 14"><path d="M1.500 8A5.500 5.500 0 1 0 3.500 3.300L1.500 5M1.500 1v4h4" fill="none" stroke="#e6e6e6" stroke-width="1.700"/></svg></button>
            <button aria-label="Delete recording"><svg width="12" height="14" viewBox="0 0 12 14"><path d="M.5 2.700h11M4 2.500V.8h4v1.700M2 3v10h8V3M4.500 5v6M7.500 5v6" fill="none" stroke="#e6e6e6" stroke-width="1.400"/></svg></button>
        </div>
        <div class="bubble">
            <svg width="8" height="11" viewBox="0 0 8 11"><path d="M2 1v9M6 1v9" stroke="#4038c8" stroke-width="2" stroke-dasharray="2 1.500"/></svg>
            <button aria-label="Open recorder"><svg width="16" height="16" viewBox="0 0 16 16"><circle cx="8" cy="8" r="3" fill="none" stroke="#fff" stroke-width="1.300"/><path d="M8 0v5M8 11v5M0 8h5M11 8h5M2.300 2.300l3.500 3.500M10.200 10.200l3.500 3.500M13.700 2.300l-3.500 3.500M5.800 10.200l-3.500 3.500" stroke="#fff" stroke-width="1.400"/></svg></button>
        </div>
        <svg class="pointer" width="9" height="13" viewBox="0 0 9 13"><path d="M.7.7v9l2.200-2 1.600 4 1.800-.8-1.600-3.700h3z" fill="#111" stroke="#fff" stroke-width=".6"/></svg>
    </div>
</body>
</html>
```
FILE: styles.css
```css
* {
    box-sizing: border-box;
}
body {
    margin: 0;
    font-family: Inter, "Liberation Sans", sans-serif;
    font-size: 9px;
    color: #1f1f1f;
}
button {
    display: flex;
    align-items: center;
    justify-content: center;
    margin: 0;
    padding: 0;
    border: 0;
    background: none;
    font: inherit;
    color: inherit;
    white-space: nowrap;
}
input,
select {
    margin: 0;
    padding: 0;
    border: 0;
    background: none;
    font: inherit;
    color: inherit;
    appearance: none;
}
svg {
    display: block;
    flex: none;
}
.sprite {
    position: absolute;
    width: 0;
    height: 0;
}
.desktop {
    position: relative;
    display: flex;
    flex-direction: column;
    min-height: 100vh;
    overflow: hidden;
    background: linear-gradient(#066b57, #057a66);
}

/* menu bar */
.menubar {
    display: flex;
    align-items: center;
    height: 23px;
    padding: 0 12px 0 14px;
    color: #fff;
    font-weight: 500;
}
.app-menu {
    display: flex;
    align-items: center;
    gap: 14px;
    margin-left: 13px;
}
.app-name {
    font-weight: 700;
}
.status-center {
    margin-left: 60px;
}
.status {
    display: flex;
    align-items: center;
    gap: 13px;
    margin-left: auto;
}
.sharing {
    display: flex;
    align-items: center;
    justify-content: center;
    width: 26px;
    height: 17px;
    margin-right: -4px;
    border-radius: 3px;
    background: #5147e5;
}
.clock {
    margin-left: 6px;
    font-family: Roboto, "Liberation Sans", sans-serif;
    font-size: 10px;
    white-space: nowrap;
}

/* browser window */
.window {
    overflow: hidden;
    border-radius: 9px;
    background: #30352f;
    box-shadow: 0 0 0 1px #0d3f35, 0 14px 18px rgba(0, 0, 0, 0.55);
}
.tabstrip {
    display: flex;
    align-items: center;
    height: 28px;
    background: #181d18;
    color: #c9cdc8;
    font-family: Roboto, "Liberation Sans", sans-serif;
}
.lights {
    display: flex;
    gap: 5px;
    margin-left: 15px;
}
.lights i {
    width: 9px;
    height: 9px;
    border-radius: 50%;
}
.lights .red { background: #ee4a54; }
.lights .yellow { background: #f4b32c; }
.lights .green { background: #2cc940; }
.pinned {
    display: flex;
    margin-left: 10px;
}
.pinned button {
    width: 33px;
    height: 12px;
    border-right: 1px solid #353b35;
}
.pinned button:last-child {
    border-right: 0;
}
.tab {
    display: flex;
    align-items: center;
    width: 168px;
    height: 12px;
    padding: 0 8px 0 9px;
    border-right: 1px solid #353b35;
}
.tab.active {
    align-self: flex-end;
    width: 165px;
    height: 24px;
    padding: 0 6px 4px;
    border-right: 0;
    border-radius: 8px 8px 0 0;
    background: #30352f;
    color: #e3e6e2;
}
.tab-title {
    flex: 1;
    margin: 0 6px 0 5px;
    overflow: hidden;
    white-space: nowrap;
    -webkit-mask-image: linear-gradient(90deg, #000 82%, transparent);
    mask-image: linear-gradient(90deg, #000 82%, transparent);
}
.new-tab {
    margin-left: 8px;
}
.tab-search {
    width: 20px;
    height: 20px;
    margin: 0 4px 0 auto;
    border-radius: 6px;
    background: #30352f;
}
.navbar {
    display: flex;
    align-items: center;
    height: 34px;
    padding-right: 14px;
    color: #d3d7d2;
}
.nav-buttons {
    display: flex;
    gap: 16px;
    margin: 0 13px 0 10px;
}
.address {
    display: flex;
    flex: 1;
    align-items: center;
    min-width: 0;
    height: 23px;
    padding: 0 11px 0 2px;
    border-radius: 12px;
    background: #1b211b;
    color: #dde0dc;
    font-size: 10px;
}
.address b {
    font-weight: 500;
    color: #f4f6f3;
}
.tune {
    display: flex;
    align-items: center;
    justify-content: center;
    width: 18px;
    height: 18px;
    border-radius: 50%;
    background: #30352f;
}
.url {
    flex: 1;
    margin-left: 5px;
    overflow: hidden;
    white-space: nowrap;
}
.extensions {
    display: flex;
    gap: 13px;
    margin-left: 13px;
}
.badged {
    position: relative;
}
.ext-badge {
    position: absolute;
    top: 5px;
    left: 2px;
    padding: 0 2px;
    border-radius: 3px;
    background: #ee3b3b;
    color: #4a0d0d;
    font-size: 7px;
    line-height: 9px;
}
.bar-sep {
    flex: none;
    width: 1px;
    height: 12px;
    margin: 0 12px;
    background: #4c524b;
}
.profile {
    width: 15px;
    height: 15px;
    border-radius: 50%;
    background: #fff;
}
.more {
    margin-left: 17px;
}
.bookmarks {
    display: flex;
    align-items: center;
    gap: 12px;
    height: 23px;
    padding: 0 10px 6px 13px;
    color: #c6cac5;
    font-family: Roboto, "Liberation Sans", sans-serif;
}
.bookmarks a {
    display: flex;
    align-items: center;
    gap: 4px;
    color: inherit;
    text-decoration: none;
    white-space: nowrap;
}
.bookmarks .bar-sep {
    margin: 0 -1px;
}
.bookmarks .push {
    margin-left: auto;
}
.red-dot {
    display: inline-block;
    width: 8px;
    height: 8px;
    border-radius: 50%;
    background: #e02a35;
    vertical-align: middle;
}

/* document */
.sheets {
    background: #f8fafc;
}
.doc-header {
    display: flex;
    align-items: center;
    height: 42px;
    padding: 0 14px 0 13px;
    font-family: Roboto, "Liberation Sans", sans-serif;
    box-shadow: inset 0 1px #b9bdbf;
}
.doc-info {
    margin-left: 9px;
}
.doc-title {
    display: flex;
    align-items: center;
    gap: 10px;
    height: 16px;
    color: #444746;
}
.doc-title h1 {
    margin: 0;
    font-family: Lato, "Liberation Sans", sans-serif;
    font-size: 12px;
    font-weight: 400;
    color: #1f1f1f;
}
.doc-menu {
    display: flex;
    gap: 10px;
    height: 12px;
}
.doc-actions {
    display: flex;
    align-items: center;
    gap: 15px;
    margin: -4px 0 0 auto;
}
.has-caret::after {
    content: "";
    width: 0;
    height: 0;
    border: 3px solid transparent;
    border-top-color: #333;
    border-bottom: 0;
}
.meet {
    gap: 6px;
    margin-left: 4px;
}
.share {
    display: flex;
    height: 25px;
    margin-right: -5px;
    border-radius: 13px;
    background: #c2e7ff;
    color: #0b2b45;
}
.share-main {
    gap: 5px;
    width: 57px;
    padding-left: 3px;
    border-right: 1px solid #e8f5ff;
    font-family: Inter, "Liberation Sans", sans-serif;
    font-weight: 600;
}
.share-more {
    width: 21px;
}
.workspace {
    display: flex;
}
.editor {
    flex: 1;
    min-width: 0;
}
.format-bar {
    display: flex;
    align-items: center;
    height: 25px;
    margin: 0 11px;
    padding: 0 7px 0 4px;
    border-radius: 13px;
    background: #edf0f3;
    color: #3c4043;
}
.menus {
    gap: 5px;
    width: 64px;
    height: 18px;
    margin-right: 1px;
    padding-right: 6px;
    border-radius: 9px;
    background: #fff;
    color: #5f6368;
}
.tool {
    width: 20px;
    height: 18px;
}
.tool.bold {
    font-size: 10px;
    font-weight: 700;
}
.tool.italic {
    font-family: "Liberation Serif", serif;
    font-size: 12px;
    font-style: italic;
    font-weight: 700;
}
.tool.small {
    font-size: 7px;
    font-weight: 500;
}
.decimal {
    position: relative;
    align-items: flex-start;
    padding-top: 2px;
    font-size: 8px;
    font-weight: 500;
}
.decimal svg {
    position: absolute;
    right: 2px;
    bottom: 2px;
}
.text-color {
    width: 14px;
    height: 14px;
    margin: 0 3px;
    border-bottom: 2px solid #000;
}
.tool-drop {
    justify-content: flex-start;
    gap: 4px;
    width: 26px;
    padding-left: 3px;
}
.tool-drop::after {
    content: "";
    border: 3px solid transparent;
    border-top-color: #3c4043;
    border-bottom: 0;
}
.faded {
    opacity: 0.5;
}
.tool-sep {
    flex: none;
    width: 1px;
    height: 12px;
    margin: 0 2px;
    background: #cfd3d8;
}
.drop {
    display: flex;
    align-items: center;
}
.drop::after {
    content: "";
    flex: none;
    margin-left: -10px;
    border: 3px solid transparent;
    border-top-color: #3c4043;
    border-bottom: 0;
    pointer-events: none;
}
.drop select {
    width: 100%;
}
.zoom {
    width: 46px;
    padding-left: 4px;
}
.font {
    width: 61px;
    padding-left: 7px;
}
.font-size {
    display: flex;
    align-items: center;
    gap: 2px;
}
.font-size button {
    width: 15px;
}
.font-size input {
    width: 21px;
    height: 16px;
    border: 1px solid #b5b9bd;
    border-radius: 3px;
    text-align: center;
}
.collapse {
    margin-left: auto;
}
.formula-bar {
    display: flex;
    align-items: center;
    height: 22px;
    padding-top: 4px;
    background: #fff;
}
.name-box {
    justify-content: flex-end;
    width: 68px;
    height: 10px;
    padding-right: 8px;
    border-right: 1px solid #c4c7c5;
}
.fx {
    margin: 0 6px 0 7px;
    font-family: "Liberation Serif", serif;
    font-size: 10px;
    font-style: italic;
    color: #80868b;
}
.formula-bar input {
    flex: 1;
}

/* spreadsheet grid */
.grid-area {
    display: flex;
    background: #fff;
}
.grid-view {
    flex: 1;
    min-width: 0;
    height: 364px;
    overflow: hidden;
}
.grid {
    width: 998px;
    table-layout: fixed;
    border-spacing: 0;
    font-family: Roboto, "Liberation Sans", sans-serif;
    font-size: 9px;
    line-height: 10px;
    text-align: center;
    color: #111;
}
.c-num { width: 29px; }
.c-a { width: 67px; }
.c-wide { width: 192px; }
.c-f { width: 135px; }
.c-time { width: 64px; }
.grid th,
.grid td {
    height: 13px;
    padding: 0 1px 0 2px;
    border-right: 1px solid #6f6f6f;
    border-bottom: 1px solid #6f6f6f;
}
.grid tbody td {
    font-family: Inter, "Liberation Sans", sans-serif;
    font-size: 8px;
}
.grid td:nth-child(2),
.grid .letters th:nth-child(2) {
    border-right: 3px solid #b5b5b5;
}
.grid th {
    border-color: #d0d3d6;
    font-size: 7px;
    font-weight: 400;
    color: #5f6368;
}
.grid .letters th {
    height: 16px;
    border-top: 1px solid #c8cbce;
    border-bottom-color: #e4e6e8;
}
.letters .before-hidden,
.letters .after-hidden {
    position: relative;
}
.before-hidden::after,
.after-hidden::before {
    content: "";
    position: absolute;
    top: 5px;
    border: 2px solid transparent;
}
.before-hidden::after {
    right: 3px;
    border-right: 3px solid #222;
    border-left: 0;
}
.after-hidden::before {
    left: 3px;
    border-left: 3px solid #222;
    border-right: 0;
}
.grid .totals td {
    border-color: #000;
    background: #000;
    color: #fff;
    font-weight: 700;
}
.grid .totals td:nth-child(2) {
    border-right-color: #b5b5b5;
}
.grid .titles td {
    height: 33px;
    padding-top: 2px;
    background: #efefef;
    font-weight: 700;
}
.grid .titles th {
    vertical-align: bottom;
}
.titles th::after {
    content: "";
    display: block;
    width: 0;
    margin-bottom: 3px;
    border: 2px solid transparent;
    border-top: 0;
    border-bottom: 3px solid #444;
}
.grid .freeze td {
    height: 5px;
    border-top: 1px solid #8a8a8a;
    border-right: 0;
    background: #c6c6c6;
}
.grid .today td {
    height: 23px;
}
.grid .today th {
    background: #d3e0f8;
}
.today td:nth-child(3),
.today td:nth-child(4),
.today td:nth-child(5) {
    text-align: left;
    white-space: nowrap;
}
.grid tbody td:last-child {
    background: #a9a9a9;
}
.grid .days tr:nth-child(3n + 1) td {
    height: 14px;
}
.v-scroll {
    display: flex;
    flex-direction: column;
    align-items: center;
    justify-content: space-between;
    width: 8px;
    padding: 72px 0 2px;
    background: #fafbfc;
}
.thumb {
    display: block;
    border-radius: 3px;
    background: #d2d4d6;
}
.v-scroll .thumb {
    width: 6px;
    height: 17px;
}
.h-scroll {
    display: flex;
    align-items: center;
    justify-content: space-between;
    height: 8px;
    padding: 0 9px 0 97px;
    background: #fff;
}
.h-scroll .thumb {
    width: 286px;
    height: 5px;
}

/* sheet tabs */
.sheet-tabs {
    display: flex;
    height: 24px;
    padding-left: 27px;
    background: linear-gradient(#f9fbfd, #eceef0);
    color: #3c4043;
    font-weight: 500;
}
.sheet-tool {
    width: 24px;
}
.sheet-tool + .sheet-tab {
    margin-left: 9px;
}
.sheet-tab {
    gap: 5px;
    padding: 1px 8px 0;
    border-bottom: 2px solid transparent;
}
.sheet-tab.red {
    border-bottom-color: #dc143c;
}
.sheet-tab.blue {
    border-bottom-color: #2a1fc4;
}
.sheet-tab.current {
    padding: 1px 9px 0;
    background: #d5e0f0;
    color: #2930b0;
    font-weight: 700;
}
.sheet-tab.current::after {
    border-top-color: #2930b0;
}
.side-panel {
    display: flex;
    flex-direction: column;
    align-items: center;
    gap: 16px;
    width: 35px;
    padding: 3px 0 8px;
    background: #f8fafc;
}
.side-panel button {
    width: 20px;
    height: 20px;
}
.side-panel hr {
    width: 12px;
    height: 1px;
    margin: 0;
    border: 0;
    background: #dfe2e5;
}
.side-panel .hide-panel {
    margin-top: auto;
}

/* dock */
.dock {
    display: flex;
    align-items: flex-start;
    align-self: center;
    gap: 13px;
    height: 62px;
    margin-top: 1px;
    padding: 8px 8px 0;
    border-radius: 15px;
    background: rgba(10, 84, 71, 0.85);
    box-shadow: 0 0 0 1px rgba(30, 120, 100, 0.5);
}
.app {
    position: relative;
    width: 43px;
    height: 43px;
}
.app svg {
    width: 43px;
    height: 43px;
}
.app::after {
    content: "";
    position: absolute;
    top: 50px;
    left: 20px;
    width: 3px;
    height: 3px;
    border-radius: 50%;
    background: #b9e5d6;
}
.zoom-app {
    border-radius: 10px;
    background: linear-gradient(#1a5ff0, #0b47d8);
    color: #fff;
    font-size: 12px;
    font-weight: 500;
}
.trash svg {
    height: 49px;
}
.trash::after {
    display: none;
}
.dock-sep {
    width: 1px;
    height: 46px;
    margin: 0 5px;
    background: #4a8577;
}

/* recorder overlay */
.recorder {
    position: absolute;
    top: 162px;
    left: 12px;
    display: flex;
    flex-direction: column;
    align-items: center;
    gap: 11px;
    width: 40px;
    height: 140px;
    padding-top: 6px;
    border-radius: 20px;
    background: #18181a;
    color: #e6e6e6;
    font-weight: 600;
    line-height: 12px;
}
.recorder button {
    flex: none;
    height: 20px;
}
.recorder .stop {
    width: 28px;
    height: 28px;
    margin-bottom: -5px;
    border-radius: 50%;
    background: #ef3e34;
}
.stop::before {
    content: "";
    width: 12px;
    height: 12px;
    border-radius: 2px;
    background: #fff;
}
.recorder .pause {
    margin-top: -5px;
}
.bubble {
    position: absolute;
    top: 544px;
    left: 2px;
    display: flex;
    align-items: center;
    gap: 2px;
}
.bubble button {
    width: 36px;
    height: 36px;
    border-radius: 50%;
    background: #5147e5;
}
.pointer {
    position: absolute;
    top: 291px;
    left: 389px;
}
```
